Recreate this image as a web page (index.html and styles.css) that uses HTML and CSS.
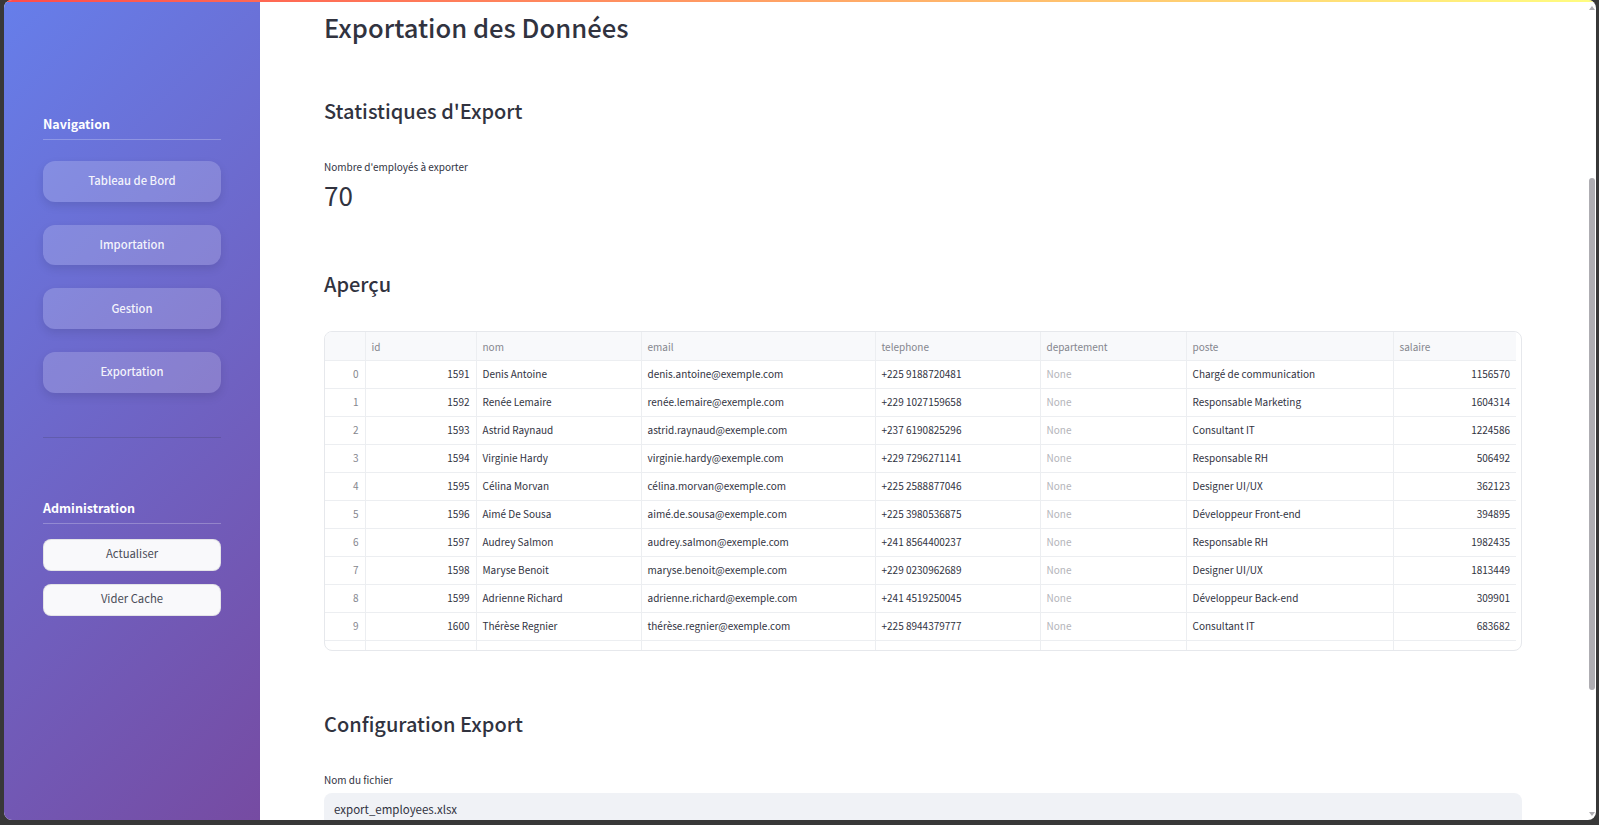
FILE: index.html
```html
<!DOCTYPE html>
<html lang="fr">
<head>
<meta charset="utf-8">
<title>Exportation des Données</title>
<link rel="stylesheet" href="styles.css">
</head>
<body>
<div class="window">
  <div class="frame">
    <div class="topbar"></div>
    <div class="app">
      <aside class="sidebar">
        <h3 class="side-title">Navigation</h3>
        <div class="nav">
          <a class="navbtn" href="#">Tableau de Bord</a>
          <a class="navbtn" href="#">Importation</a>
          <a class="navbtn" href="#">Gestion</a>
          <a class="navbtn" href="#">Exportation</a>
        </div>
        <hr class="side-divider">
        <h3 class="side-title admin">Administration</h3>
        <div class="adminbtns">
          <button class="adminbtn">Actualiser</button>
          <button class="adminbtn">Vider Cache</button>
        </div>
      </aside>
      <main class="main">
        <h1>Exportation des Données</h1>
        <h2 class="stats-title">Statistiques d'Export</h2>
        <div class="metric-label">Nombre d'employés à exporter</div>
        <div class="metric-value">70</div>
        <h2 class="preview-title">Aperçu</h2>
        <div class="tablewrap">
          <table id="preview">
            <colgroup>
              <col class="c0"><col class="c1"><col class="c2"><col class="c3"><col class="c4"><col class="c5"><col class="c6"><col class="c7">
            </colgroup>
            <thead>
              <tr><th></th><th>id</th><th>nom</th><th>email</th><th>telephone</th><th>departement</th><th>poste</th><th>salaire</th></tr>
            </thead>
            <tbody>
              <tr><td class="idx">0</td><td class="num">1591</td><td>Denis Antoine</td><td>denis.antoine@exemple.com</td><td>+225 9188720481</td><td class="none">None</td><td>Chargé de communication</td><td class="num">1156570</td></tr>
              <tr><td class="idx">1</td><td class="num">1592</td><td>Renée Lemaire</td><td>renée.lemaire@exemple.com</td><td>+229 1027159658</td><td class="none">None</td><td>Responsable Marketing</td><td class="num">1604314</td></tr>
              <tr><td class="idx">2</td><td class="num">1593</td><td>Astrid Raynaud</td><td>astrid.raynaud@exemple.com</td><td>+237 6190825296</td><td class="none">None</td><td>Consultant IT</td><td class="num">1224586</td></tr>
              <tr><td class="idx">3</td><td class="num">1594</td><td>Virginie Hardy</td><td>virginie.hardy@exemple.com</td><td>+229 7296271141</td><td class="none">None</td><td>Responsable RH</td><td class="num">506492</td></tr>
              <tr><td class="idx">4</td><td class="num">1595</td><td>Célina Morvan</td><td>célina.morvan@exemple.com</td><td>+225 2588877046</td><td class="none">None</td><td>Designer UI/UX</td><td class="num">362123</td></tr>
              <tr><td class="idx">5</td><td class="num">1596</td><td>Aimé De Sousa</td><td>aimé.de.sousa@exemple.com</td><td>+225 3980536875</td><td class="none">None</td><td>Développeur Front-end</td><td class="num">394895</td></tr>
              <tr><td class="idx">6</td><td class="num">1597</td><td>Audrey Salmon</td><td>audrey.salmon@exemple.com</td><td>+241 8564400237</td><td class="none">None</td><td>Responsable RH</td><td class="num">1982435</td></tr>
              <tr><td class="idx">7</td><td class="num">1598</td><td>Maryse Benoit</td><td>maryse.benoit@exemple.com</td><td>+229 0230962689</td><td class="none">None</td><td>Designer UI/UX</td><td class="num">1813449</td></tr>
              <tr><td class="idx">8</td><td class="num">1599</td><td>Adrienne Richard</td><td>adrienne.richard@exemple.com</td><td>+241 4519250045</td><td class="none">None</td><td>Développeur Back-end</td><td class="num">309901</td></tr>
              <tr><td class="idx">9</td><td class="num">1600</td><td>Thérèse Regnier</td><td>thérèse.regnier@exemple.com</td><td>+225 8944379777</td><td class="none">None</td><td>Consultant IT</td><td class="num">683682</td></tr>
              <tr class="cut"><td></td><td></td><td></td><td></td><td></td><td></td><td></td><td></td></tr>
            </tbody>
          </table>
        </div>
        <h2 class="config-title">Configuration Export</h2>
        <label class="field-label" for="filename">Nom du fichier</label>
        <input class="field" id="filename" type="text" value="export_employees.xlsx">
      </main>
      <div class="scrollbar">
        <span class="arrow up"></span>
        <span class="thumb"></span>
        <span class="arrow down"></span>
      </div>
    </div>
  </div>
</div>
</body>
</html>
```
FILE: styles.css
```css
html, body {
  margin: 0;
  height: 100%;
  overflow: hidden;
}

body {
  background-color: #383838;
  font-family: "Noto Sans CJK SC", "Noto Sans", sans-serif;
  color: #31333f;
}

.window {
  height: 820px;
  width: 1599px;
  box-sizing: border-box;
  padding: 0 3px 0 4px;
}

.frame {
  height: 100%;
  display: flex;
  flex-direction: column;
  border-radius: 8px;
  overflow: hidden;
  background-color: white;
}

.topbar {
  height: 2px;
  flex: none;
  background: linear-gradient(90deg, #ff4b4b, #fffd80);
}

.app {
  flex: 1;
  min-height: 0;
  display: flex;
}

/* Sidebar */
.sidebar {
  width: 256px;
  flex: none;
  box-sizing: border-box;
  padding: 113px 39px 0 39px;
  background: linear-gradient(135deg, #667eea 0%, #764ba2 100%);
}

.side-title {
  margin: 0;
  padding-bottom: 7px;
  color: white;
  font-size: 12.5px;
  line-height: 17px;
  font-weight: 700;
  border-bottom: 1px solid rgba(255,255,255,0.25);
}

.nav {
  margin-top: 21px;
  display: flex;
  flex-direction: column;
  gap: 23px;
}

.navbtn {
  height: 40.67px;
  box-sizing: border-box;
  padding-bottom: 2px;
  display: flex;
  align-items: center;
  justify-content: center;
  border-radius: 12px;
  background-color: rgba(255,255,255,0.18);
  box-shadow: 0 4px 10px rgba(0,0,0,0.1);
  color: rgba(255,255,255,0.92);
  font-size: 11.3px;
  font-weight: 500;
  text-decoration: none;
}

.side-divider {
  margin: 44px 0 0 0;
  border: none;
  border-top: 1px solid rgba(49,51,63,0.2);
}

.side-title.admin {
  margin-top: 61px;
}

.adminbtns {
  margin-top: 15px;
  display: flex;
  flex-direction: column;
  gap: 13px;
}

.adminbtn {
  height: 32px;
  padding: 0 0 3px 0;
  border: 1px solid rgba(49,51,63,0.1);
  border-radius: 8px;
  background-color: #f9f9fb;
  color: #4a4c57;
  font-family: inherit;
  font-size: 11.3px;
}

/* Main */
.main {
  flex: 1;
  min-width: 0;
  overflow: hidden;
  padding: 0 66px 0 64px;
}

h1 {
  margin: 7px 0 0 0;
  font-size: 25.6px;
  line-height: 36px;
  font-weight: 500;
}

h2 {
  margin: 0;
  font-size: 20px;
  line-height: 30px;
  font-weight: 500;
}

.stats-title {
  margin-top: 51px;
}

.metric-label {
  margin-top: 33px;
  font-size: 10px;
  line-height: 16px;
}

.metric-value {
  margin-top: 1px;
  font-size: 26px;
  line-height: 38px;
}

.preview-title {
  margin-top: 55px;
}

/* Table */
.tablewrap {
  margin-top: 32px;
  height: 320px;
  box-sizing: border-box;
  border: 1px solid #e6e8ec;
  border-radius: 8px;
  padding-right: 5px;
  overflow: hidden;
}

#preview {
  table-layout: fixed;
  width: 1191px;
  border-collapse: collapse;
  font-size: 10px;
}

.c0 { width: 40px; }
.c1 { width: 111px; }
.c2 { width: 165px; }
.c3 { width: 234px; }
.c4 { width: 165px; }
.c5 { width: 146px; }
.c6 { width: 207px; }
.c7 { width: 123px; }

#preview th, #preview td {
  height: 28px;
  padding: 0 6px 2px 6px;
  box-sizing: border-box;
  border-right: 1px solid #eceef1;
  border-bottom: 1px solid #eceef1;
  white-space: nowrap;
  overflow: hidden;
  font-weight: 400;
  text-align: left;
}

#preview th {
  padding: 1px 6px 0 6px;
  background-color: #f8f9fb;
  color: #85868e;
}

#preview th:last-child, #preview td:last-child {
  border-right: none;
}

#preview td.num, #preview td.idx {
  text-align: right;
}

#preview td.idx {
  color: #85868e;
}

#preview td.none {
  color: #b3b4b9;
}

#preview tr.cut td {
  height: 10px;
  padding: 0;
  border-bottom: none;
}

/* Config */
.config-title {
  margin-top: 58px;
}

.field-label {
  display: block;
  margin-top: 33px;
  font-size: 10px;
  line-height: 16px;
}

.field {
  display: block;
  width: 100%;
  box-sizing: border-box;
  margin-top: 5px;
  height: 40px;
  padding: 0 10px 8px 10px;
  border: none;
  border-radius: 8px;
  background-color: #f0f2f6;
  color: #31333f;
  font-family: inherit;
  font-size: 11.5px;
}

/* Scrollbar */
.scrollbar {
  width: 8px;
  flex: none;
  position: relative;
}

.thumb {
  position: absolute;
  left: 1px;
  top: 176px;
  width: 6px;
  height: 512px;
  border-radius: 3px;
  background-color: #aeadb2;
}

.arrow {
  position: absolute;
  left: 1px;
  width: 0;
  height: 0;
  border-left: 3px solid transparent;
  border-right: 3px solid transparent;
}

.arrow.up {
  top: 4px;
  border-bottom: 4px solid #aeadb2;
}

.arrow.down {
  bottom: 4px;
  border-top: 4px solid #aeadb2;
}
```
